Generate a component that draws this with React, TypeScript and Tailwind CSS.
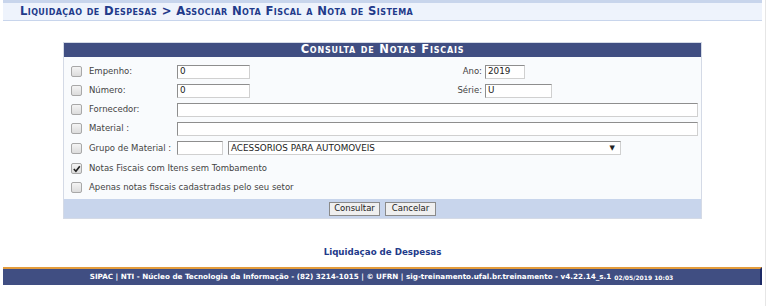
import type { ReactNode } from "react";

const FONT = { fontFamily: '"DejaVu Sans", Verdana, sans-serif' };

function Box({ checked = false }: { checked?: boolean }) {
  return (
    <span className="relative inline-block h-[11px] w-[11px] shrink-0 rounded-[2px] border border-[#a8a8a8] bg-gradient-to-b from-[#f4f4f4] to-[#dcdcdc]">
      {checked && (
        <svg viewBox="0 0 11 11" className="absolute left-0 top-0 h-[10px] w-[10px]">
          <path d="M2 5.5 L4.3 8 L8.6 2.4" fill="none" stroke="#222" strokeWidth="1.8" />
        </svg>
      )}
    </span>
  );
}

function Input({ value = "", w }: { value?: string; w: string }) {
  return (
    <div
      className={`flex h-[14px] items-center border border-t-[#8e8e8e] border-l-[#8e8e8e] border-b-[#d0d0d0] border-r-[#d0d0d0] bg-white pl-[2px] text-[8.8px] leading-none text-[#222] ${w}`}
    >
      {value}
    </div>
  );
}

function Row({ checked, label, children }: { checked?: boolean; label: string; children?: ReactNode }) {
  return (
    <div className="flex h-[19px] items-center pl-[7px]">
      <Box checked={checked} />
      <span className="ml-[7px] w-[88px] shrink-0 whitespace-nowrap text-[#444]">{label}</span>
      {children}
    </div>
  );
}

export default function App() {
  return (
    <div className="relative h-[306px] w-[768px] overflow-hidden bg-white text-[8.5px]" style={FONT}>
      <div className="absolute right-[2px] top-0 h-full w-px bg-[#e6e6e6]" />
      <div className="ml-[3px] w-[759px]">
        <div className="h-[3px] bg-[#c8d5ec]" />
        <div className="flex h-[18px] items-center border-b border-[#c8d5ec] bg-[#eef3fc] pl-[17px]">
          <span className="text-[11.6px] font-bold tracking-[0.4px] text-[#223a8a]" style={{ fontVariant: "small-caps" }}>
            Liquidaçao de Despesas &gt; Associar Nota Fiscal a Nota de Sistema
          </span>
        </div>

        <div className="ml-[60px] mt-[21px] w-[639px] border border-[#d4dae6] bg-[#f9fbfd]">
          <div className="flex h-[14px] items-center justify-center bg-[#404e82]">
            <span className="text-[11.5px] font-bold tracking-[0.8px] text-white" style={{ fontVariant: "small-caps" }}>
              Consulta de Notas Fiscais
            </span>
          </div>
          <div className="pt-[5px] pb-[2px]">
            <Row label="Empenho:">
              <Input value="0" w="w-[73px]" />
              <span className="w-[235px] shrink-0 pr-[3px] text-right text-[#444]">Ano:</span>
              <Input value="2019" w="w-[40px]" />
            </Row>
            <Row label="Número:">
              <Input value="0" w="w-[73px]" />
              <span className="w-[235px] shrink-0 pr-[3px] text-right text-[#444]">Série:</span>
              <Input value="U" w="w-[67px]" />
            </Row>
            <Row label="Fornecedor:">
              <Input w="w-[521px]" />
            </Row>
            <Row label="Material :">
              <Input w="w-[521px]" />
            </Row>
            <div className="flex h-[20px] items-center pl-[7px]">
              <Box />
              <span className="ml-[7px] w-[88px] shrink-0 whitespace-nowrap text-[#444]">Grupo de Material :</span>
              <Input w="w-[46px]" />
              <div className="ml-[5px] flex h-[14px] w-[393px] items-center justify-between border border-t-[#8e8e8e] border-l-[#8e8e8e] border-b-[#d0d0d0] border-r-[#d0d0d0] bg-white pl-[2px] pr-[5px] text-[8.8px] leading-none text-[#222]">
                <span>ACESSORIOS PARA AUTOMOVEIS</span>
                <span className="text-[7px]">▼</span>
              </div>
            </div>
            <div className="flex h-[20px] items-center pl-[7px]">
              <Box checked />
              <span className="ml-[7px] text-[#444]">Notas Fiscais com Itens sem Tombamento</span>
            </div>
            <div className="flex h-[19px] items-center pl-[7px]">
              <Box />
              <span className="ml-[7px] text-[#444]">Apenas notas fiscais cadastradas pelo seu setor</span>
            </div>
          </div>
          <div className="flex h-[19px] items-center justify-center gap-[5px] bg-[#c8d5ec]">
            <button className="h-[14px] w-[51px] border border-[#8a8a8a] bg-[#efefef] text-[8.5px] leading-none text-[#222]">Consultar</button>
            <button className="h-[14px] w-[51px] border border-[#8a8a8a] bg-[#efefef] text-[8.5px] leading-none text-[#222]">Cancelar</button>
          </div>
        </div>

        <div className="mt-[27px] text-center">
          <span className="text-[8.7px] font-bold text-[#223a8a]">Liquidaçao de Despesas</span>
        </div>

        <div className="mt-[8px] border-t-2 border-[#e49c3c] border-r-2 border-r-[#1c2a66] bg-[#404e82]">
          <div className="flex h-[16px] items-center justify-center whitespace-nowrap text-[7.2px] font-bold text-white">
            SIPAC | NTI - Núcleo de Tecnologia da Informação - (82) 3214-1015 | © UFRN | sig-treinamento.ufal.br.treinamento - v4.22.14_s.1
            <span className="ml-[3px] text-[6px]">02/05/2019 10:03</span>
          </div>
        </div>
      </div>
    </div>
  );
}
